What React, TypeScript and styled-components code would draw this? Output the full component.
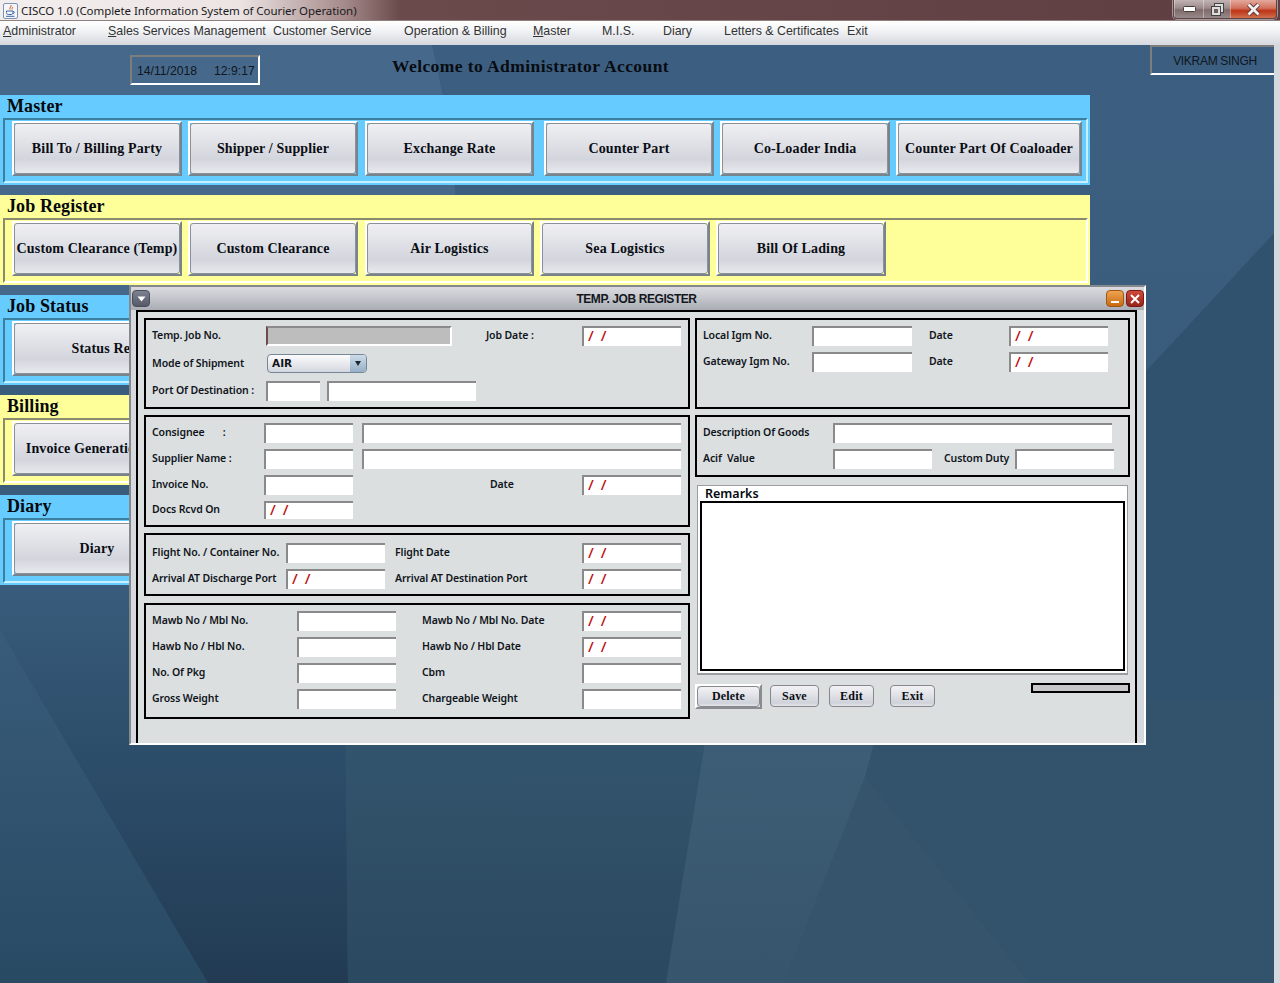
import * as React from 'react'
import styled, { createGlobalStyle } from 'styled-components'

const wallpaper = `<svg xmlns='http://www.w3.org/2000/svg' width='1274' height='938' viewBox='0 45 1274 938'>
<defs>
<linearGradient id='a' x1='0' y1='0' x2='0' y2='1'><stop offset='0' stop-color='#3c5e80'/><stop offset='.55' stop-color='#3a5c7a'/><stop offset='1' stop-color='#32526b'/></linearGradient>
<linearGradient id='b' gradientUnits='userSpaceOnUse' x1='0' y1='585' x2='0' y2='983'><stop offset='0' stop-color='#3a5e7e'/><stop offset='1' stop-color='#294a63'/></linearGradient>
<linearGradient id='c' gradientUnits='userSpaceOnUse' x1='0' y1='585' x2='0' y2='983'><stop offset='0' stop-color='#395c7c'/><stop offset='.35' stop-color='#2e506d'/><stop offset='1' stop-color='#223b53'/></linearGradient>
<linearGradient id='d' x1='0' y1='0' x2='0' y2='1'><stop offset='0' stop-color='#34566f'/><stop offset='1' stop-color='#2b4960'/></linearGradient>
<linearGradient id='e' x1='0' y1='0' x2='0' y2='1'><stop offset='0' stop-color='#3e5f78'/><stop offset='1' stop-color='#37556d'/></linearGradient>
</defs>
<rect x='0' y='45' width='1274' height='938' fill='url(#a)'/>
<polygon points='0,45 432,45 447,115 470,330 0,330' fill='#46698b'/>
<polygon points='1274,233 1175,340 1146,371 900,640 885,745 1274,745' fill='#31526f'/>
<polygon points='0,585 345,585 345,983 0,983' fill='url(#b)'/>
<polygon points='0,630 208,983 348,983 345,585 0,585' fill='url(#c)'/>
<polygon points='345,700 712,700 666,983 348,983' fill='url(#d)'/>
<polygon points='885,700 1274,700 1274,983 1030,983 865,777' fill='#33536c'/>
<polygon points='712,700 885,700 865,777 784,983 666,983' fill='url(#e)'/>
<polygon points='865,777 1030,983 784,983' fill='#36546c'/>
</svg>`

const GlobalStyle = createGlobalStyle`
  html, body { margin: 0; padding: 0; height: 100%; overflow: hidden; }
  #root { height: 100%; }
`

const Page = styled.div`
  width: 1280px;
  height: 983px;
  display: flex;
  flex-direction: column;
  background: #d5d8dc;
  font-family: "Liberation Sans", Arial, sans-serif;
`

const TitleBar = styled.div`
  height: 20px;
  flex: none;
  display: flex;
  align-items: flex-start;
  background: linear-gradient(90deg, #f3eeee 0, #ece4e3 240px, #a58a8a 345px, #6a4a4b 400px, #5e3e40 100%);
  border-bottom: 1px solid #8f7f7f;
`

const AppIcon = styled.svg`
  width: 15px;
  height: 16px;
  margin: 3px 3px 0 3px;
  flex: none;
`

const AppTitle = styled.span`
  font-family: "Noto Sans", sans-serif;
  font-size: 11.5px;
  line-height: 21px;
  letter-spacing: -0.07px;
  color: #1a1a22;
  white-space: nowrap;
`

const Controls = styled.div`
  margin-left: auto;
  margin-right: 3px;
  display: flex;
  height: 18px;
  border: 1px solid #5a4648;
  border-top: 0;
  border-radius: 0 0 4px 4px;
  box-shadow: 0 0 0 1px rgba(255, 255, 255, 0.45);
  overflow: hidden;
`

const Control = styled.div<{ $w: number; $close?: boolean }>`
  width: ${p => p.$w}px;
  box-sizing: border-box;
  display: flex;
  align-items: center;
  justify-content: center;
  border-left: 1px solid rgba(255, 255, 255, 0.35);
  background: ${p => p.$close
    ? 'linear-gradient(180deg, #e3a99c 0, #d2705c 45%, #bd3417 60%, #d0704e 100%)'
    : 'linear-gradient(180deg, #c2b4b4 0, #9c8a8b 45%, #7f6a6b 55%, #97898a 100%)'};
`

const MenuBar = styled.div`
  height: 24px;
  flex: none;
  display: flex;
  align-items: center;
  padding-left: 3px;
  padding-bottom: 4px;
  box-sizing: border-box;
  background: linear-gradient(180deg, #ffffff 0, #f4f5f7 35%, #d5d8de 100%);
`

const MenuItem = styled.span<{ $w: number }>`
  width: ${p => p.$w}px;
  flex: none;
  font-size: 12.4px;
  color: #333;
  white-space: nowrap;
`

const Body = styled.div`
  flex: 1;
  display: flex;
`

const Desktop = styled.div`
  position: relative;
  width: 1274px;
  height: 938px;
  flex: none;
  background: url("data:image/svg+xml,${encodeURIComponent(wallpaper)}") no-repeat;
`

const Header = styled.div`
  height: 50px;
  display: flex;
  align-items: flex-start;
`

const ClockBox = styled.div`
  margin: 10px 0 0 130px;
  width: 130px;
  height: 30px;
  box-sizing: border-box;
  padding: 2px 0 0 5px;
  display: flex;
  align-items: center;
  font-size: 12.2px;
  color: #10161e;
  white-space: pre;
  border: 2px solid;
  border-color: #7d7d7d #fff #fff #7d7d7d;
`

const Welcome = styled.div`
  margin: 11px 0 0 132px;
  font-family: "Liberation Serif", serif;
  font-weight: bold;
  font-size: 17.5px;
  line-height: 20px;
  letter-spacing: 0.42px;
  color: #080c12;
  white-space: nowrap;
`

const UserBox = styled.div`
  margin-left: auto;
  width: 124px;
  height: 30px;
  box-sizing: border-box;
  padding: 2px 0 0 4px;
  display: flex;
  align-items: center;
  justify-content: center;
  font-size: 12px;
  letter-spacing: -0.3px;
  color: #10161e;
  border-top: 2px solid #7d7d7d;
  border-left: 2px solid #7d7d7d;
  border-bottom: 2px solid #fff;
`

const Section = styled.section<{ $bg: string }>`
  width: 1090px;
  height: 90px;
  margin-bottom: 10px;
  box-sizing: border-box;
  background: ${p => p.$bg};
  padding: 0 2px 2px 3px;
  display: flex;
  flex-direction: column;
`

const SectionTitle = styled.h2`
  margin: 0;
  height: 23px;
  padding-left: 4px;
  box-sizing: border-box;
  font-family: "Liberation Serif", serif;
  font-weight: bold;
  font-size: 18px;
  line-height: 22px;
  letter-spacing: 0.1px;
  color: #05090e;
  flex: none;
`

const Rail = styled.div<{ $dark: string; $light: string }>`
  flex: 1;
  display: flex;
  align-items: flex-start;
  padding: 1px 0 0 7px;
  border: 2px solid;
  border-color: ${p => p.$dark} ${p => p.$light} ${p => p.$light} ${p => p.$dark};
`

const BigEtch = styled.div<{ $w: number; $ml: number }>`
  width: ${p => p.$w}px;
  height: 55px;
  margin-left: ${p => p.$ml}px;
  flex: none;
  box-sizing: border-box;
  border: 2px solid;
  border-color: #fff #77838d #77838d #fff;
`

const BigButton = styled.button`
  width: 100%;
  height: 100%;
  padding: 0;
  border: 1px solid #8d9095;
  border-radius: 3px;
  background: linear-gradient(180deg, #f0f0f3 0, #e2e3e8 35%, #d3d5dd 72%, #e8e9ee 100%);
  font-family: "Liberation Serif", serif;
  font-weight: bold;
  font-size: 14px;
  letter-spacing: 0.15px;
  color: #0a0e14;
  white-space: nowrap;
  overflow: hidden;
`

const JobFrame = styled.div`
  position: absolute;
  left: 129px;
  top: 240px;
  width: 1017px;
  height: 460px;
  box-sizing: border-box;
  display: flex;
  flex-direction: column;
  background: #d5d8dc;
  border-style: solid;
  border-width: 2px 2px 2px 2px;
  border-color: #85888c #fff #fff #85888c;
`

const FrameBar = styled.div`
  height: 23px;
  flex: none;
  display: grid;
  grid-template-columns: 1fr auto 1fr;
  align-items: center;
  background: linear-gradient(180deg, #dadbe0 0, #c6c8ce 45%, #a9acb4 100%);
`

const FrameTitle = styled.div`
  margin-left: -2px;
  font-size: 12px;
  font-weight: bold;
  letter-spacing: -0.42px;
  color: #14181d;
`

const FrameLeft = styled.div`
  display: flex;
  padding-left: 1px;
`

const FrameRight = styled.div`
  display: flex;
  justify-content: flex-end;
  gap: 2px;
`

const FrameBtn = styled.div<{ $kind: 'menu' | 'min' | 'close' }>`
  width: 18px;
  height: 17px;
  box-sizing: border-box;
  border-radius: 4px;
  display: flex;
  align-items: center;
  justify-content: center;
  border: 1px solid ${p => (p.$kind === 'menu' ? '#4a4e5a' : p.$kind === 'min' ? '#a2560f' : '#7c1a12')};
  background: ${p => p.$kind === 'menu'
    ? 'linear-gradient(180deg, #7d8190, #565a68)'
    : p.$kind === 'min'
      ? 'linear-gradient(180deg, #eea552, #c9690f)'
      : 'linear-gradient(180deg, #cf4a3c, #98231a)'};
`

const FrameInner = styled.div`
  flex: 1;
  margin: 0 7px 0 5px;
  min-height: 0;
  box-sizing: border-box;
  padding: 6px 6px 0 6px;
  display: flex;
  gap: 5px;
  background: #dcdfe0;
  border: 2px solid #000;
  border-bottom: 0;
`

const Column = styled.div<{ $w: number }>`
  width: ${p => p.$w}px;
  flex: none;
  display: flex;
  flex-direction: column;
`

const Panel = styled.div<{ $h: number; $gap?: number; $pad?: number; $mb?: number }>`
  height: ${p => p.$h}px;
  margin-bottom: ${p => p.$mb ?? 6}px;
  box-sizing: border-box;
  border: 2px solid #000;
  padding: ${p => p.$pad ?? 6}px 0 0 6px;
  display: flex;
  flex-direction: column;
  gap: ${p => p.$gap ?? 6}px;
`

const Row = styled.div<{ $h?: number }>`
  height: ${p => p.$h ?? 20}px;
  display: flex;
  align-items: center;
`

const Label = styled.label<{ $w: number; $ml?: number }>`
  width: ${p => p.$w}px;
  margin-left: ${p => p.$ml ?? 0}px;
  padding-bottom: 2px;
  flex: none;
  font-family: "Noto Sans", sans-serif;
  font-weight: 600;
  font-size: 10.5px;
  letter-spacing: -0.12px;
  color: #10151c;
  white-space: pre;
`

const Input = styled.input<{ $w: number; $ml?: number; $h?: number }>`
  width: ${p => p.$w}px;
  margin-left: ${p => p.$ml ?? 0}px;
  height: ${p => p.$h ?? 20}px;
  flex: none;
  box-sizing: border-box;
  padding: 0 0 5px 4px;
  background: #fff;
  border: 0;
  border-top: 2px solid #8a8a8a;
  border-left: 2px solid #8a8a8a;
  outline: none;
  font-family: "Noto Sans", sans-serif;
  font-size: 15px;
  font-weight: 500;
  color: #c00d0d;
  word-spacing: 3px;
`

const ReadOnlyInput = styled(Input)`
  background: #bdbdbd;
  border-left-color: #6e4a4a;
  border-right: 2px solid #fff;
  border-bottom: 2px solid #fff;
`

const SelectBox = styled.div`
  width: 100px;
  height: 19px;
  flex: none;
  box-sizing: border-box;
  display: flex;
  align-items: stretch;
  border: 1px solid #76879a;
  border-radius: 4px;
  overflow: hidden;
  background: linear-gradient(180deg, #fbfbfc 0, #e8eaee 50%, #d3d6dc 100%);
`

const SelectValue = styled.span`
  flex: 1;
  padding-left: 4px;
  font-family: "DejaVu Sans", sans-serif;
  font-weight: bold;
  font-size: 10.5px;
  line-height: 17px;
  color: #12161c;
`

const SelectArrow = styled.span`
  width: 16px;
  display: flex;
  align-items: center;
  justify-content: center;
  background: linear-gradient(180deg, #cddbe8, #97b0c8);
  &::after {
    content: '';
    border-style: solid;
    border-width: 5px 3.5px 0 3.5px;
    border-color: #1d2733 transparent transparent transparent;
  }
`

const Remarks = styled.div`
  margin: 2px 2px 0 2px;
  padding: 0 2px 2px 2px;
  height: 190px;
  box-sizing: border-box;
  background: #fff;
  border: 1px solid #9a9da2;
  border-bottom-width: 2px;
  display: flex;
  flex-direction: column;
`

const RemarksTitle = styled.div`
  height: 15px;
  padding-left: 5px;
  font-family: "Noto Sans", sans-serif;
  font-weight: 600;
  font-size: 12.5px;
  line-height: 15px;
  color: #05090e;
  flex: none;
`

const RemarksText = styled.textarea`
  flex: 1;
  width: 100%;
  box-sizing: border-box;
  resize: none;
  outline: none;
  background: #fff;
  border: 2px solid #000;
`

const ActionRow = styled.div`
  margin-top: 9px;
  display: flex;
  align-items: flex-start;
`

const DeleteEtch = styled.div`
  width: 67px;
  height: 25px;
  flex: none;
  box-sizing: border-box;
  border: 2px solid;
  border-color: #fff #8a8c90 #8a8c90 #fff;
  margin-right: 8px;
`

const ActionButton = styled.button<{ $w?: number; $mr?: number }>`
  width: ${p => (p.$w ? `${p.$w}px` : '100%')};
  height: ${p => (p.$w ? '22px' : '100%')};
  margin-top: ${p => (p.$w ? 1 : 0)}px;
  margin-right: ${p => p.$mr ?? 0}px;
  flex: none;
  padding: 0;
  border: 1px solid #85888d;
  border-radius: 4px;
  background: linear-gradient(180deg, #f3f3f5 0, #e3e4e9 40%, #cfd2da 85%, #e4e5ea 100%);
  font-family: "Liberation Serif", serif;
  font-weight: bold;
  font-size: 12px;
  letter-spacing: 0.2px;
  color: #0a0e14;
`

const ProgressBar = styled.div`
  margin-left: auto;
  margin-top: -1px;
  width: 99px;
  height: 10px;
  box-sizing: border-box;
  flex: none;
  background: #c8c8c8;
  border: 2px solid #000;
`

const RightStrip = styled.div`
  flex: 1;
  background: #d5d8dc;
`

const menus: [React.ReactNode, number][] = [
  [<><u>A</u>dministrator</>, 105],
  [<><u>S</u>ales Services Management</>, 165],
  ['Customer Service', 131],
  ['Operation & Billing', 129],
  [<><u>M</u>aster</>, 69],
  ['M.I.S.', 61],
  ['Diary', 61],
  ['Letters & Certificates', 123],
  ['Exit', 40],
]

const BLUE = { bg: '#66ccff', dark: '#3b7f9f', light: '#c4f0ff' }
const YELLOW = { bg: '#ffff99', dark: '#8a8a70', light: '#ffffff' }

const sections = [
  {
    title: 'Master', ...BLUE, buttons: [
      ['Bill To / Billing Party', 170, 0], ['Shipper / Supplier', 170, 6], ['Exchange Rate', 169, 7],
      ['Counter Part', 170, 10], ['Co-Loader India', 170, 6], ['Counter Part Of Coaloader', 186, 6],
    ]
  },
  {
    title: 'Job Register', ...YELLOW, buttons: [
      ['Custom Clearance (Temp)', 170, 0], ['Custom Clearance', 170, 6], ['Air Logistics', 169, 7],
      ['Sea Logistics', 170, 6], ['Bill Of Lading', 170, 6],
    ]
  },
  { title: 'Job Status', ...BLUE, buttons: [['Status Report', 204, 0]] },
  { title: 'Billing', ...YELLOW, buttons: [['Invoice Generation', 145, 0]] },
  { title: 'Diary', ...BLUE, buttons: [['Diary', 170, 0]] },
] as { title: string; bg: string; dark: string; light: string; buttons: [string, number, number][] }[]

const DateInput = (p: { $w?: number; $h?: number; $ml?: number }) => (
  <Input $w={p.$w ?? 99} $h={p.$h} $ml={p.$ml} defaultValue="/ /" />
)

const App = () => (
  <Page>
    <GlobalStyle />
    <TitleBar>
      <AppIcon viewBox="0 0 15 16">
        <rect x="0.5" y="0.5" width="14" height="15" rx="1.5" fill="#f4f6fa" stroke="#7f93b5" />
        <path d="M8 2c1 1.5-2 2.500-1 4.500M9.500 4c.5 1-1 1.500-.5 2.500" stroke="#d8541c" strokeWidth="1" fill="none" />
        <path d="M3.500 8h6.500v1.500c0 1.500-1 2-2 2h-2.500c-1 0-2-.5-2-2zM10 8.500c2 0 2 2-.5 2.300" stroke="#3c68a8" strokeWidth="1" fill="none" />
        <path d="M3 13.300h8.500" stroke="#3c68a8" strokeWidth="1" />
      </AppIcon>
      <AppTitle>CISCO 1.0 (Complete Information System of Courier Operation)</AppTitle>
      <Controls>
        <Control $w={29}>
          <svg width="13" height="6" viewBox="0 0 13 6"><rect x="0.5" y="0.500" width="12" height="5" rx="1" fill="#fff" stroke="#4b3a3a" /></svg>
        </Control>
        <Control $w={27}>
          <svg width="13" height="13" viewBox="0 0 13 13"><rect x="3.500" y="0.500" width="9" height="9" fill="#ddd" stroke="#444" /><rect x="0.500" y="3.500" width="9" height="9" fill="#ddd" stroke="#444" /><rect x="3" y="6" width="4" height="4" fill="#6f5e5e" /></svg>
        </Control>
        <Control $w={46} $close>
          <svg width="15" height="13" viewBox="0 0 15 13"><path d="M2.500 1.500l10 10M12.500 1.500l-10 10" stroke="#4d3434" strokeWidth="4.500" /><path d="M2.500 1.500l10 10M12.500 1.500l-10 10" stroke="#f4f0f0" strokeWidth="2.800" /></svg>
        </Control>
      </Controls>
    </TitleBar>
    <MenuBar>
      {menus.map(([text, w], i) => <MenuItem key={i} $w={w}>{text}</MenuItem>)}
    </MenuBar>
    <Body>
      <Desktop>
        <Header>
          <ClockBox>{'14/11/2018     12:9:17'}</ClockBox>
          <Welcome>Welcome to Administrator Account</Welcome>
          <UserBox>VIKRAM SINGH</UserBox>
        </Header>
        {sections.map(s => (
          <Section key={s.title} $bg={s.bg}>
            <SectionTitle>{s.title}</SectionTitle>
            <Rail $dark={s.dark} $light={s.light}>
              {s.buttons.map(([text, w, ml]) => (
                <BigEtch key={text} $w={w} $ml={ml}>
                  <BigButton>{text}</BigButton>
                </BigEtch>
              ))}
            </Rail>
          </Section>
        ))}

        <JobFrame>
          <FrameBar>
            <FrameLeft>
              <FrameBtn $kind="menu">
                <svg width="9" height="6" viewBox="0 0 9 6"><path d="M0.500 0.500h8l-4 5z" fill="#fff" /></svg>
              </FrameBtn>
            </FrameLeft>
            <FrameTitle>TEMP. JOB REGISTER</FrameTitle>
            <FrameRight>
              <FrameBtn $kind="min">
                <svg width="10" height="10" viewBox="0 0 10 10"><rect x="1" y="7" width="8" height="2" fill="#fff" /></svg>
              </FrameBtn>
              <FrameBtn $kind="close">
                <svg width="10" height="10" viewBox="0 0 10 10"><path d="M1 1l8 8M9 1l-8 8" stroke="#fff" strokeWidth="2" /></svg>
              </FrameBtn>
            </FrameRight>
          </FrameBar>
          <FrameInner>
            <Column $w={546}>
              <Panel $h={91} $gap={8}>
                <Row>
                  <Label $w={114}>Temp. Job No.</Label>
                  <ReadOnlyInput $w={186} readOnly />
                  <Label $w={96} $ml={34}>Job Date :</Label>
                  <DateInput />
                </Row>
                <Row $h={19}>
                  <Label $w={115}>Mode of Shipment</Label>
                  <SelectBox>
                    <SelectValue>AIR</SelectValue>
                    <SelectArrow />
                  </SelectBox>
                </Row>
                <Row>
                  <Label $w={114}>Port Of Destination :</Label>
                  <Input $w={54} />
                  <Input $w={149} $ml={7} />
                </Row>
              </Panel>
              <Panel $h={112}>
                <Row>
                  <Label $w={112}>{'Consignee       :'}</Label>
                  <Input $w={89} />
                  <Input $w={319} $ml={9} />
                </Row>
                <Row>
                  <Label $w={112}>Supplier Name :</Label>
                  <Input $w={89} />
                  <Input $w={319} $ml={9} />
                </Row>
                <Row>
                  <Label $w={112}>Invoice No.</Label>
                  <Input $w={89} />
                  <Label $w={92} $ml={137}>Date</Label>
                  <DateInput />
                </Row>
                <Row $h={18}>
                  <Label $w={112}>Docs Rcvd On</Label>
                  <DateInput $w={89} $h={18} />
                </Row>
              </Panel>
              <Panel $h={63} $pad={8} $mb={7}>
                <Row>
                  <Label $w={134}>Flight No. / Container No.</Label>
                  <Input $w={99} />
                  <Label $w={187} $ml={10}>Flight Date</Label>
                  <DateInput />
                </Row>
                <Row>
                  <Label $w={134}>Arrival AT Discharge Port</Label>
                  <DateInput />
                  <Label $w={187} $ml={10}>Arrival AT Destination Port</Label>
                  <DateInput />
                </Row>
              </Panel>
              <Panel $h={116} $mb={0}>
                <Row>
                  <Label $w={145}>Mawb No / Mbl No.</Label>
                  <Input $w={99} />
                  <Label $w={160} $ml={26}>Mawb No / Mbl No. Date</Label>
                  <DateInput />
                </Row>
                <Row>
                  <Label $w={145}>Hawb No / Hbl No.</Label>
                  <Input $w={99} />
                  <Label $w={160} $ml={26}>Hawb No / Hbl Date</Label>
                  <DateInput />
                </Row>
                <Row>
                  <Label $w={145}>No. Of Pkg</Label>
                  <Input $w={99} />
                  <Label $w={160} $ml={26}>Cbm</Label>
                  <Input $w={99} />
                </Row>
                <Row>
                  <Label $w={145}>Gross Weight</Label>
                  <Input $w={99} />
                  <Label $w={160} $ml={26}>Chargeable Weight</Label>
                  <Input $w={99} />
                </Row>
              </Panel>
            </Column>
            <Column $w={435}>
              <Panel $h={91}>
                <Row>
                  <Label $w={109}>Local Igm No.</Label>
                  <Input $w={100} />
                  <Label $w={80} $ml={17}>Date</Label>
                  <DateInput />
                </Row>
                <Row>
                  <Label $w={109}>Gateway Igm No.</Label>
                  <Input $w={100} />
                  <Label $w={80} $ml={17}>Date</Label>
                  <DateInput />
                </Row>
              </Panel>
              <Panel $h={62}>
                <Row>
                  <Label $w={130}>Description Of Goods</Label>
                  <Input $w={279} />
                </Row>
                <Row>
                  <Label $w={130}>{'Acif  Value'}</Label>
                  <Input $w={99} />
                  <Label $w={71} $ml={12}>Custom Duty</Label>
                  <Input $w={99} />
                </Row>
              </Panel>
              <Remarks>
                <RemarksTitle>Remarks</RemarksTitle>
                <RemarksText />
              </Remarks>
              <ActionRow>
                <DeleteEtch>
                  <ActionButton>Delete</ActionButton>
                </DeleteEtch>
                <ActionButton $w={49} $mr={10}>Save</ActionButton>
                <ActionButton $w={45} $mr={16}>Edit</ActionButton>
                <ActionButton $w={45}>Exit</ActionButton>
                <ProgressBar />
              </ActionRow>
            </Column>
          </FrameInner>
        </JobFrame>
      </Desktop>
      <RightStrip />
    </Body>
  </Page>
)

export default App
